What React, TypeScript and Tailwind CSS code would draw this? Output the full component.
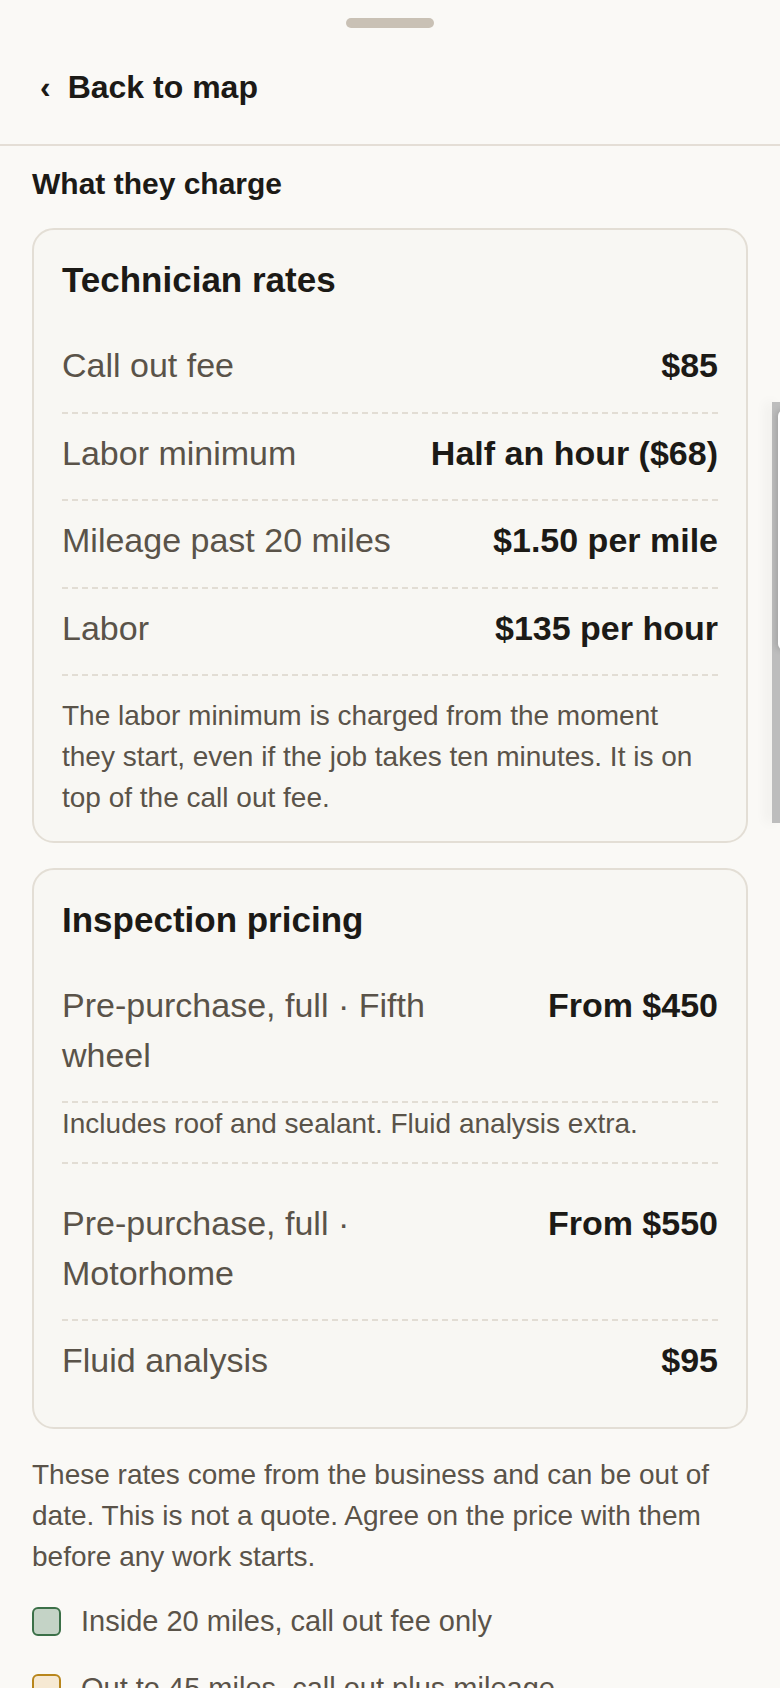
import React from "react";

const font = "font-['Liberation_Sans',Arial,sans-serif]";

type Item = { label: string; value: string };

function Row({ item, last = false, className = "" }: { item: Item; last?: boolean; className?: string }) {
  return (
    <div
      className={`flex items-start gap-8 pt-[15px] ${
        last ? "pb-[19px]" : "pb-[21px] border-b-2 border-dashed border-[#e2ddd4]"
      } ${className}`}
    >
      <span className="flex-1 min-w-0 text-[34px] leading-[49.5px] text-[#5a5349]">{item.label}</span>
      <span className="shrink-0 whitespace-nowrap text-right text-[34px] leading-[49.5px] font-bold text-[#1c1a16]">
        {item.value}
      </span>
    </div>
  );
}

const techRates: Item[] = [
  { label: "Call out fee", value: "$85" },
  { label: "Labor minimum", value: "Half an hour ($68)" },
  { label: "Mileage past 20 miles", value: "$1.50 per mile" },
  { label: "Labor", value: "$135 per hour" },
];

function App() {
  return (
    <div className={`relative h-[1688px] w-full overflow-hidden bg-[#faf9f6] ${font}`}>
      {/* sheet handle */}
      <div className="flex justify-center pt-[18px]">
        <div className="h-[10px] w-[88px] rounded-full bg-[#c9c1b5]" />
      </div>

      {/* header */}
      <div className="border-b-2 border-[#e4ded6] pl-[40px] pt-[39px] pb-[37px]">
        <button className="flex items-center gap-[17px] text-[32px] leading-[40px] font-bold text-[#1c1a16]">
          <span>‹</span>
          <span>Back to map</span>
        </button>
      </div>

      <div className="px-[32px]">
        <h2 className="mt-[20px] text-[30px] leading-[36px] font-bold text-[#1c1a16]">What they charge</h2>

        {/* Technician rates */}
        <div className="mt-[26px] rounded-[22px] border-2 border-[#e3ded5] bg-[#f8f7f3] px-[28px] pt-[28px] pb-[23px]">
          <h3 className="mb-[24px] text-[35px] leading-[44px] font-bold text-[#1c1a16]">Technician rates</h3>
          {techRates.map((r) => (
            <Row key={r.label} item={r} />
          ))}
          <p className="mt-[19px] text-[28px] leading-[41px] text-[#5a5349]">
            The labor minimum is charged from the moment they start, even if the job takes ten minutes. It is on top of
            the call out fee.
          </p>
        </div>

        {/* Inspection pricing */}
        <div className="mt-[25px] rounded-[22px] border-2 border-[#e3ded5] bg-[#f8f7f3] px-[28px] pt-[28px] pb-[22px]">
          <h3 className="mb-[24px] text-[35px] leading-[44px] font-bold text-[#1c1a16]">Inspection pricing</h3>
          <Row item={{ label: "Pre-purchase, full · Fifth wheel", value: "From $450" }} />
          <p className="mb-[20px] border-b-2 border-dashed border-[#e2ddd4] pb-[18px] text-[28px] leading-[41px] text-[#5a5349]">
            Includes roof and sealant. Fluid analysis extra.
          </p>
          <Row item={{ label: "Pre-purchase, full · Motorhome", value: "From $550" }} />
          <Row item={{ label: "Fluid analysis", value: "$95" }} last />
        </div>

        <p className="mt-[25px] text-[28px] leading-[41px] text-[#5a5349]">
          These rates come from the business and can be out of date. This is not a quote. Agree on the price with them
          before any work starts.
        </p>

        {/* legend */}
        <div className="mt-[24px] flex flex-col gap-[26px]">
          <div className="flex items-center gap-[20px]">
            <span className="h-[29px] w-[29px] shrink-0 rounded-[6px] border-2 border-[#3b7048] bg-[#c4d3c6]" />
            <span className="text-[29px] leading-[41px] text-[#5a5349]">Inside 20 miles, call out fee only</span>
          </div>
          <div className="flex items-center gap-[20px]">
            <span className="h-[29px] w-[29px] shrink-0 rounded-[6px] border-2 border-[#b8861c] bg-[#f6e9d3]" />
            <span className="text-[29px] leading-[41px] text-[#5a5349]">Out to 45 miles, call out plus mileage</span>
          </div>
        </div>
      </div>

      {/* peeking side panel at the right edge */}
      <div className="absolute right-0 top-[402px] h-[421px] w-[8px] bg-[#bdbdbd] shadow-[-6px_0_12px_rgba(0,0,0,0.05)]">
        <div className="absolute left-[6px] top-[8px] h-[240px] w-[10px] rounded-l-[6px] bg-white shadow-[-2px_0_6px_rgba(0,0,0,0.15)]" />
      </div>
    </div>
  );
}

export default App;
